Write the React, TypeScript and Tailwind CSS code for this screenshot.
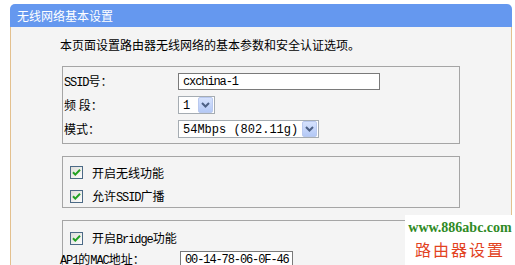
import React from 'react';

const cjk = '"Noto Sans CJK SC", "Liberation Sans", sans-serif';

function Latin({ children, wide }: { children: React.ReactNode; wide?: boolean }) {
  return (
    <span className={wide ? "font-['Liberation_Mono',monospace] text-[12px]" : "font-['Liberation_Mono',monospace] text-[12px] tracking-[-1.1px]"}>
      {children}
    </span>
  );
}

function CheckBox() {
  return (
    <svg width="13" height="13" viewBox="0 0 13 13" className="shrink-0">
      <defs>
        <linearGradient id="cbfill" x1="0" y1="0" x2="1" y2="1">
          <stop offset="0" stopColor="#dcdcd7" />
          <stop offset="1" stopColor="#ffffff" />
        </linearGradient>
      </defs>
      <rect x="0.5" y="0.5" width="12" height="12" fill="url(#cbfill)" stroke="#4c6a86" />
      <path d="M3 6.2 L5.3 8.6 L10 3.8" fill="none" stroke="#21a121" strokeWidth="2" />
    </svg>
  );
}

function DropButton() {
  return (
    <span className="flex h-[16px] w-[15px] items-center justify-center rounded-[2px] border border-[#b9c9ef] bg-gradient-to-b from-[#d6e2fd] to-[#b4c9f6]">
      <svg width="9" height="6" viewBox="0 0 9 6">
        <path d="M1 1 L4.5 4.5 L8 1" fill="none" stroke="#4d6185" strokeWidth="2" />
      </svg>
    </span>
  );
}

function Select({ value, width }: { value: React.ReactNode; width: string }) {
  return (
    <div className={`flex h-[18px] ${width} items-center justify-between border border-[#a5acb2] bg-white pl-[4px] pr-[1px]`}>
      <span className="text-[12px] leading-none text-black">{value}</span>
      <DropButton />
    </div>
  );
}

export default function App() {
  return (
    <div className="relative h-[265px] w-[515px] overflow-hidden bg-white pl-[10px] pr-[3px] pt-[4px]" style={{ fontFamily: cjk }}>
      {/* header */}
      <div className="flex h-[23px] items-center rounded-t-[5px] bg-[#6598ef] pl-[7px] text-[12px] text-white">
        无线网络基本设置
      </div>

      {/* body */}
      <div className="h-[238px] border-l border-r border-[#e3c08e] bg-[#f4f4f4] pl-[51px]">
        <p className="-ml-[2px] pt-[10px] text-[12px] leading-[16px] text-black">
          本页面设置路由器无线网络的基本参数和安全认证选项。
        </p>

        {/* basic settings */}
        <div className="mt-[13px] flex h-[78px] w-[398px] flex-col gap-[6px] border border-[#a5a5a5] pl-[1px] pt-[6px] text-[12px] text-black">
          <div className="flex h-[17px] items-center">
            <span className="w-[114px]"><Latin>SSID</Latin>号：</span>
            <div className="flex h-[17px] w-[202px] items-center border border-[#7a7a7a] bg-white pl-[4px]">
              <Latin>cxchina-1</Latin>
            </div>
          </div>
          <div className="flex h-[18px] items-center">
            <span className="w-[114px]">频 段：</span>
            <Select value={<Latin wide>1</Latin>} width="w-[37px]" />
          </div>
          <div className="flex h-[18px] items-center">
            <span className="w-[114px]">模式：</span>
            <Select value={<Latin wide>54Mbps (802.11g)</Latin>} width="w-[141px]" />
          </div>
        </div>

        {/* switches */}
        <div className="mt-[12px] flex h-[52px] w-[398px] flex-col gap-[11px] border border-[#a5a5a5] pl-[7px] pt-[9px] text-[12px] text-black">
          <label className="flex h-[13px] items-center gap-[9px]">
            <CheckBox />
            <span>开启无线功能</span>
          </label>
          <label className="flex h-[13px] items-center gap-[9px]">
            <CheckBox />
            <span>允许<Latin>SSID</Latin>广播</span>
          </label>
        </div>

        {/* bridge */}
        <div className="mt-[12px] h-[60px] w-[398px] border border-[#a5a5a5] pl-[7px] pt-[11px] text-[12px] text-black">
          <label className="flex h-[13px] items-center gap-[9px]">
            <CheckBox />
            <span>开启<Latin>Bridge</Latin>功能</span>
          </label>
          <div className="-ml-[10px] mt-[6px] flex h-[17px] items-center">
            <span className="w-[120px] leading-[14px]"><Latin>AP1</Latin>的<Latin>MAC</Latin>地址：</span>
            <div className="flex h-[17px] w-[113px] items-center border border-[#7a7a7a] bg-white pl-[4px]">
              <Latin>00-14-78-06-0F-46</Latin>
            </div>
          </div>
        </div>
      </div>

      {/* watermark */}
      <div className="absolute left-[405px] top-[215px] flex h-[50px] w-[110px] flex-col items-center bg-white pt-[4px]">
        <span className="font-['Liberation_Serif',serif] text-[14px] font-bold leading-[18px] text-[#2f8a25]">www.886abc.com</span>
        <span className="mt-[2px] text-[16px] leading-[20px] tracking-[2px] text-[#e2431f]">路由器设置</span>
      </div>
    </div>
  );
}
